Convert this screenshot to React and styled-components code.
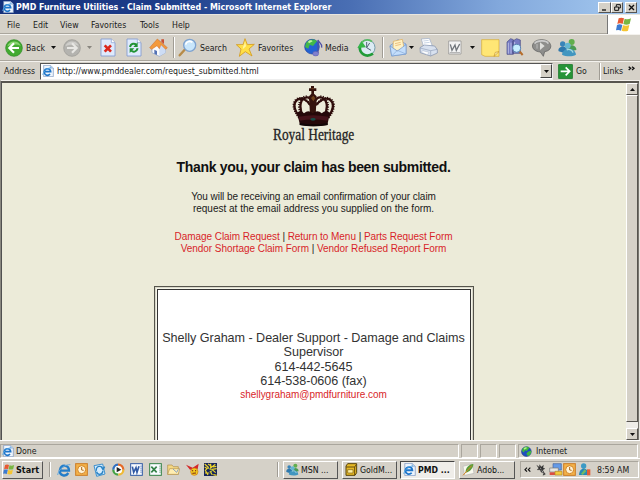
import React from "react";
import styled, { createGlobalStyle, css } from "styled-components";

const Global = createGlobalStyle`
  * { box-sizing: border-box; }
  body { margin: 0; overflow: hidden; }
  svg { display: block; flex: none; }
`;

const face = "#d5d1c8";
const uiFont = css`font-family: "DejaVu Sans Condensed", "DejaVu Sans", sans-serif; font-stretch: condensed;`;

const Desktop = styled.div`
  width: 640px; height: 480px; overflow: hidden;
  display: flex; flex-direction: column;
  background: ${face}; color: #1a1a1a;
  ${uiFont} font-size: 8.7px;
`;
const TitleBar = styled.header`
  height: 14px; flex: none; display: flex; align-items: center;
  padding: 0 3px 0 2px;
  background: linear-gradient(90deg, #15317c 0%, #1d3d8a 25%, #4a6fb4 55%, #82a8dc 78%, #a6caf0 100%);
`;
const Title = styled.h1`
  margin: 0 auto 0 2px; color: #fff; font-size: 8.8px; font-weight: bold; line-height: 13px; white-space: nowrap;
`;
const WinButton = styled.button`
  width: ${p => p.$w}px; height: 11px; padding: 0; margin-left: ${p => p.$gap || 0}px;
  display: grid; place-items: center; background: ${face};
  border: 1px solid; border-color: #fff #555 #555 #fff;
`;
const MenuBar = styled.nav`
  height: 20px; flex: none; display: flex; padding-left: 7px;
  border-top: 1px solid #e9e6df; border-bottom: 1px solid #aaa69d;
`;
const MenuItem = styled.span`
  width: ${p => p.$w}px; line-height: 21px; white-space: nowrap;
`;
const Flag = styled.div`
  width: 33px; height: 19px; margin-left: auto; background: #fff; border-left: 1px solid #777;
  display: grid; place-items: center;
`;
const ToolBar = styled.div`
  height: 27px; flex: none; display: flex; align-items: center; padding-left: 5px;
  border-top: 1px solid #f4f2ee; border-bottom: 1px solid #aaa69d;
`;
const Slot = styled.div`
  width: ${p => p.$w}px; flex: none; display: flex; align-items: center; white-space: nowrap;
`;
const Divider = styled.i`
  width: 2px; height: ${p => p.$h || 21}px; flex: none; margin-right: ${p => p.$gap || 0}px;
  border-left: 1px solid #a09c94; border-right: 1px solid #fff;
`;
const AddressBar = styled.div`
  height: 19px; flex: none; display: flex; align-items: center; padding-left: 4px;
  border-top: 1px solid #f4f2ee;
`;
const AddressField = styled.div`
  width: 513px; height: 17px; display: flex; align-items: center; background: #fff;
  border: 1px solid; border-color: #555 #eee #eee #555; padding-left: 1px;
`;
const Url = styled.span`margin: 0 auto 0 3px; white-space: nowrap;`;
const DropButton = styled.button`
  width: 12px; height: 14px; padding: 0; display: grid; place-items: center; background: ${face};
  border: 1px solid; border-color: #fff #444 #444 #fff;
`;
const Viewport = styled.main`
  height: 360px; flex: none; display: flex; background: #ecebd9; overflow: hidden;
  border-top: 1px solid #f2f0ea; border-left: 1px solid #8a8880; border-right: 1px solid #e5e3dd;
`;
const Frame = styled.div`
  flex: 1; display: flex; border: 1px solid #505050; border-bottom: 0; border-top: 2px solid #58564f; border-right: 0;
`;
const Page = styled.article`
  flex: 1; display: flex; flex-direction: column; align-items: center; overflow: hidden;
  font-family: "Liberation Sans", Arial, sans-serif; padding: 2px 1px 0 0; text-align: center;
`;
const Brand = styled.div`
  height: 17px; font-family: "Liberation Serif", serif; font-size: 16px; line-height: 15px;
  color: #222; white-space: nowrap; transform: scaleX(0.835); -webkit-text-stroke: 0.3px #222;
`;
const Heading = styled.h2`
  margin: 16px 0 0; font-size: 14px; line-height: 18px; font-weight: bold; color: #111; white-space: nowrap;
  letter-spacing: -0.32px;
`;
const Para = styled.div`margin-top: ${p => p.$mt}px;`;
const Line = styled.div`
  font-size: 10px; line-height: 12px; height: 12px; white-space: nowrap; letter-spacing: ${p => p.$ls || 0}px;
  margin-top: ${p => p.$mt || 0}px;
`;
const Link = styled.a`color: #d81f2a; text-decoration: none;`;
const Card = styled.section`
  width: 320px; height: 170px; flex: none; margin-top: 31px; padding-top: 44px; background: #fff;
  border: 1px solid #55544c;
  box-shadow: inset 0 0 0 1px #d9d8c9, inset 0 0 0 2px #f6f5ea, inset 0 0 0 3px #333;
`;
const CardLine = styled.div`
  font-size: 12.6px; line-height: 14.4px; height: 14.3px; color: #333; white-space: nowrap; letter-spacing: -0.04px;
`;
const ScrollBar = styled.div`
  width: 13px; flex: none; display: flex; flex-direction: column; background: #eeece7; border-right: 1px solid #77756f;
`;
const ScrollButton = styled.button`
  height: ${p => p.$h}px; flex: none; padding: 0; display: grid; place-items: center; background: ${face};
  border: 1px solid; border-color: #fff #55534e #55534e #fff;
  margin-top: ${p => p.$mt || 0}px;
`;
const StatusBar = styled.footer`
  height: 18px; flex: none; display: flex; gap: 2px; padding: 3px 2px 1px 0; border-top: 1px solid #fff;
`;
const Pane = styled.div`
  width: ${p => p.$w}px; height: 14px; display: flex; align-items: center; gap: ${p => p.$gap || 2}px; padding-left: ${p => p.$pl || 1}px;
  border: 1px solid; border-color: #aaa69d #fff #fff #aaa69d; white-space: nowrap;
`;
const TaskBar = styled.footer`
  height: 22px; flex: none; display: flex; align-items: center; padding-left: 2px; border-top: 1px solid #fff;
`;
const TaskButton = styled.button`
  ${uiFont} font-size: 8.7px; color: #111; font-weight: ${p => (p.$bold ? "bold" : "normal")};
  width: ${p => p.$w}px; height: 18px; margin: 0 ${p => p.$gap}px 0 0; padding: 0 0 0 2px; flex: none;
  display: flex; align-items: center; gap: 2px; white-space: nowrap;
  background: ${p => (p.$active ? "#efede9" : face)};
  border: 1px solid; border-color: ${p => (p.$active ? "#444 #fff #fff #444" : "#fff #555 #555 #fff")};
`;
const StartButton = styled(TaskButton)`
  font-size: 9px; padding-left: 0; gap: 1px; font-weight: bold;
`;
const Tray = styled.div`
  width: 119px; height: 17px; display: flex; align-items: center; padding-left: 3px;
  border: 1px solid; border-color: #aaa69d #fff #fff #aaa69d;
`;

/* Icons share a 3-units-per-pixel grid. */
const Icon = ({ w = 19, h = 19, vb, children }) => (
  <svg width={w} height={h} viewBox={vb || `0 0 ${w * 3} ${h * 3}`} fill="none">{children}</svg>
);
const Arrow = ({ up, dim }) => (
  <svg width="5" height="3" viewBox="0 0 5 3"><path d={up ? "M0 3L2.5 0L5 3Z" : "M0 0H5L2.5 3Z"} fill={dim ? "#88857e" : "#111"} /></svg>
);
const IePage = ({ s = 12 }) => (
  <Icon w={s} h={s} vb="0 0 36 36">
    <path d="M5 1H25L34 9V35H5Z" fill="#eef5fd" stroke="#7793bd" strokeWidth="2" />
    <path d="M25 1V10H34" fill="#b9d0ec" stroke="#7793bd" />
    <path d="M24 27C17 35 5 29 7 19C9 9 25 8 26 20H9" stroke="#1e75c9" strokeWidth="5" />
    <path d="M2 30C5 17 16 9 28 8" stroke="#52aae9" strokeWidth="2.5" />
  </Icon>
);
const Nav = ({ fwd }) => (
  <Icon w={18} h={18}>
    <circle cx="27" cy="27" r="25" fill={fwd ? "#b4b3af" : "#43aa31"} stroke={fwd ? "#989792" : "#2d8a24"} strokeWidth="2" />
    <path d="M7 22C12 3 41 3 47 21C35 14 20 16 7 22Z" fill={fwd ? "#cfcecb" : "#8ad571"} />
    <path d={fwd ? "M12 27H40M27 13L41 27L27 41" : "M42 27H14M27 13L13 27L27 41"} stroke={fwd ? "#e8e7e4" : "#fff"} strokeWidth="6.5" />
  </Icon>
);
const Sheet = ({ children }) => (
  <Icon w={16} h={19}>
    <path d="M3 3H34L45 14V54H3Z" fill="#dfeafc" stroke="#8098cf" strokeWidth="2.5" />
    <path d="M34 3V14H45" fill="#fff" stroke="#8098cf" strokeWidth="2" />
    {children}
  </Icon>
);
const Home = () => (
  <Icon w={19} h={19}>
    <path d="M9 27V44L31 55L49 44V24L30 8Z" fill="#fbfbfb" stroke="#879fc9" strokeWidth="2" />
    <path d="M31 55V29L42 17L49 27V44Z" fill="#cddcf4" />
    <path d="M37 4H45V18L37 11Z" fill="#c94f33" />
    <path d="M2 29L25 3L55 29L50 34L36 20L31 32L24 23L8 34Z" fill="#f39a3c" stroke="#cd6924" strokeWidth="1.5" />
    <path d="M16 35L24 39V51L16 47Z" fill="#5472b4" />
  </Icon>
);
const SearchIcon = () => (
  <Icon w={19} h={19}>
    <path d="M20 35L5 52" stroke="#b78b48" strokeWidth="7" strokeLinecap="round" />
    <circle cx="35" cy="22" r="18" fill="#c9e6fb" stroke="#7da2cf" strokeWidth="4" />
    <path d="M23 20C25 9 38 8 43 13" stroke="#fff" strokeWidth="5" />
  </Icon>
);
const Star = () => (
  <Icon w={19} h={19}>
    <path d="M27 2L34 20L55 19L39 33L48 54L28 41L10 55L15 33L1 20L21 20Z" fill="#ffdf45" stroke="#d49b21" strokeWidth="2.5" />
    <path d="M27 9L30 25L20 34L22 24L9 22L24 23Z" fill="#fff6a5" />
  </Icon>
);
const Globe = ({ s = 15 }) => (
  <Icon w={s} h={s} vb="0 0 45 45">
    <circle cx="22" cy="23" r="20" fill="#1f4fc0" stroke="#18367f" strokeWidth="2" />
    <path d="M7 10C17 0 31 2 34 8L24 20L16 17L12 27L4 20ZM28 24L42 18C43 31 36 39 28 41L22 32Z" fill="#41b83c" />
    <path d="M11 9C17 4 23 5 25 8L14 15Z" fill="#b8ef8d" />
  </Icon>
);
const Media = () => (
  <Icon w={20} h={19}>
    <circle cx="24" cy="26" r="22" fill="#2462d2" stroke="#1b3e9d" strokeWidth="2" />
    <path d="M6 15C16 1 35 2 39 10L27 24L17 20L13 32L3 27Z" fill="#42b849" />
    <path d="M12 11C17 5 24 6 26 10L15 16Z" fill="#bff5a0" />
    <path d="M42 46V6C45 17 56 15 53 29" stroke="#4d50a7" strokeWidth="4" />
    <ellipse cx="35" cy="47" rx="9" ry="7" fill="#8080cc" stroke="#4547a2" />
  </Icon>
);
const HistoryIcon = () => (
  <Icon w={19} h={19}>
    <circle cx="30" cy="29" r="24" fill="#dcebf4" stroke="#739cab" strokeWidth="3" />
    <path d="M29 12V29L42 37M29 29L38 15" stroke="#526577" strokeWidth="3" />
    <path d="M48 47C27 61 6 46 9 25" stroke="#219b38" strokeWidth="8" />
    <path d="M1 30L14 9L27 28Z" fill="#35b747" />
    <path d="M15 13C24 3 38 4 45 11" stroke="#59bb64" strokeWidth="5" />
  </Icon>
);
const Mail = () => (
  <Icon w={18} h={19}>
    <path d="M3 23L27 5L51 18V48L8 54Z" fill="#a7cbf5" stroke="#6c8fc5" strokeWidth="2" />
    <path d="M13 10L40 4L45 29L25 39L12 31Z" fill="#fff2c5" stroke="#dda852" strokeWidth="2" />
    <path d="M18 17L35 13M19 23L36 19" stroke="#e5a85a" strokeWidth="2" />
    <path d="M3 24L25 39L51 20V48L8 54Z" fill="#c3ddfb" stroke="#7197cb" strokeWidth="2" />
    <path d="M8 54L25 37L51 48" stroke="#86a9d7" strokeWidth="2" />
  </Icon>
);
const Printer = () => (
  <Icon w={19} h={19}>
    <path d="M14 26L7 3L31 1L40 24Z" fill="#fff" stroke="#9aabc5" strokeWidth="2" />
    <path d="M13 9L29 7M15 15L32 13" stroke="#adc0d8" strokeWidth="2" />
    <path d="M3 29L16 21L47 24L55 35V45L35 54L4 44Z" fill="#d8e1ef" stroke="#7c8ba7" strokeWidth="2" />
    <path d="M3 30L35 38L55 34M35 38V54" stroke="#91a0b9" strokeWidth="2" />
    <path d="M11 38L30 43L25 50L7 43Z" fill="#fff" stroke="#8395b2" />
  </Icon>
);
const WordEdit = () => (
  <Icon w={14} h={15}>
    <path d="M2 3H39V42H2Z" fill="#f3f3f3" stroke="#8c8c8c" strokeWidth="2" />
    <path d="M7 13L12 31L21 15L25 31L35 12" stroke="#71767c" strokeWidth="4" />
    <path d="M5 38H36" stroke="#aaa" strokeWidth="3" />
  </Icon>
);
const Note = () => (
  <Icon w={19} h={18}>
    <path d="M2 2H54V52H12L2 47Z" fill="#ffe675" stroke="#d7aa32" strokeWidth="2" />
    <path d="M39 52L43 40L54 38Z" fill="#fff7be" stroke="#c69022" strokeWidth="2" />
  </Icon>
);
const Books = () => (
  <Icon w={18} h={19}>
    <path d="M3 12L14 2L22 5V49H3ZM19 10L32 2L43 6V46H20Z" fill="#777bc3" stroke="#464982" strokeWidth="2" />
    <path d="M7 14V47M15 14V47M26 12V43" stroke="#b9bce4" strokeWidth="3" />
    <path d="M39 38L50 51" stroke="#b66d2b" strokeWidth="6" />
    <circle cx="32" cy="31" r="12" fill="#c6edff" stroke="#5a82b0" strokeWidth="3" />
  </Icon>
);
const Bubble = () => (
  <Icon w={20} h={19}>
    <path d="M29 5C60 5 67 37 38 41L34 55L25 42C-9 39-5 5 29 5Z" fill="#8e8e8c" stroke="#575757" strokeWidth="2" />
    <path d="M8 17C14 7 43 5 49 17" stroke="#ccc" strokeWidth="5" />
    <path d="M24 13L38 24L24 36Z" fill="#dededb" />
    <path d="M15 18V32" stroke="#bbb" strokeWidth="3" />
  </Icon>
);
const People = ({ s = 19 }) => (
  <Icon w={s} h={s} vb="0 0 57 57">
    <circle cx="41" cy="12" r="9" fill="#61ae4d" /><path d="M28 28C32 17 57 20 55 36L36 40Z" fill="#4a9b54" />
    <circle cx="14" cy="18" r="8" fill="#3984b9" /><path d="M1 36C3 23 24 21 28 36L21 46L2 40Z" fill="#2e78ad" />
    <circle cx="29" cy="23" r="9" fill="#65b7d2" /><path d="M12 50C15 26 51 26 54 50C42 57 24 56 12 50Z" fill="#4296c0" />
    <path d="M26 36C34 31 44 37 45 44" stroke="#a6d9de" strokeWidth="4" />
  </Icon>
);
const GoIcon = () => (
  <Icon w={15} h={15}>
    <rect x="1" y="1" width="43" height="43" rx="3" fill="#269336" stroke="#176d25" strokeWidth="2" />
    <path d="M8 22H34M23 10L35 22L23 34" stroke="#fff" strokeWidth="5" />
  </Icon>
);
const WinFlag = ({ w = 16, h = 15 }) => (
  <Icon w={w} h={h} vb="0 0 48 45">
    <path d="M8 4Q16 0 24 4L20 21Q12 17 4 21Z" fill="#e85a33" />
    <path d="M26 5Q35 9 45 4L41 21Q31 25 22 21Z" fill="#79b742" />
    <path d="M3 24Q11 20 19 24L15 41Q8 37 0 40Z" fill="#3d7bd0" />
    <path d="M21 25Q31 28 40 24L36 41Q27 45 17 41Z" fill="#f5c533" />
  </Icon>
);
const Crown = () => (
  <Icon w={43} h={42} vb="98 14 129 126">
    <path d="M122 112C100 84 103 67 114 58C129 50 144 61 153 74M131 109C116 76 124 50 146 51C155 53 159 69 160 107M205 112C226 84 223 67 212 58C199 50 184 59 170 74M194 109C210 78 202 50 180 51C168 53 161 69 161 107" stroke="#35100e" strokeWidth="7" />
    <path d="M120 112C98 84 101 66 112 57C129 48 144 60 153 74M128 109C112 75 121 47 146 49M207 112C228 84 226 66 214 57C199 48 184 58 170 74M197 109C213 78 205 47 180 49" stroke="#280b0a" strokeWidth="8" strokeDasharray="3 4" />
    <path d="M155 17H164V24H171V32H164V40L172 48L169 104H152L149 48L156 40V32H149V24H155Z" fill="#35130d" />
    <path d="M155 53L162 46L168 54L162 63Z" fill="#70441c" />
    <path d="M156 25H164" stroke="#6a3b1e" strokeWidth="3" />
    <path d="M113 97Q124 87 134 99Q147 86 160 99Q175 86 187 99Q199 87 212 97L204 134Q162 142 122 134Z" fill="#250809" />
    <path d="M118 109Q161 100 207 109L204 121Q162 114 121 121Z" fill="#45131a" />
    <path d="M121 131Q162 139 205 131" stroke="#120606" strokeWidth="6" />
    <ellipse cx="161" cy="117" rx="8" ry="4" fill="#174d48" />
  </Icon>
);
const IeMark = () => (
  <Icon w={14} h={14}>
    <path d="M34 30C25 44 5 36 9 20C13 3 36 5 36 23H11" stroke="#247dc9" strokeWidth="7" />
    <path d="M2 36C4 19 24 4 40 5" stroke="#66a9dc" strokeWidth="3" />
  </Icon>
);
const ClockTile = ({ s = 13 }) => (
  <Icon w={s} h={s} vb="0 0 39 39">
    <rect x="2" y="2" width="35" height="35" fill="#f4b349" stroke="#cc7c25" strokeWidth="3" />
    <circle cx="20" cy="20" r="12" fill="#fff3d5" stroke="#d38324" strokeWidth="3" /><path d="M20 12V21L26 22" stroke="#ad671d" strokeWidth="3" />
  </Icon>
);
const Express = () => (
  <Icon w={13} h={14}>
    <path d="M3 8L29 3L36 33L11 40Z" fill="#d4ebfc" stroke="#3e91ce" strokeWidth="3" />
    <path d="M10 23C9 7 27 7 29 18M25 12L30 20L35 11M30 24C27 38 12 36 11 26" stroke="#2a83c5" strokeWidth="4" />
  </Icon>
);
const Player = () => (
  <Icon w={13} h={13}>
    <circle cx="19" cy="20" r="15" fill="#fff" />
    <path d="M18 5A15 15 0 0 0 4 20" stroke="#3170c2" strokeWidth="7" /><path d="M4 20A15 15 0 0 0 19 35" stroke="#45a246" strokeWidth="7" />
    <path d="M18 5A15 15 0 0 1 34 20" stroke="#e56b29" strokeWidth="7" /><path d="M34 20A15 15 0 0 1 19 35" stroke="#efba36" strokeWidth="7" />
    <path d="M14 12L28 20L14 28Z" fill="#222" />
  </Icon>
);
const OfficeTile = ({ color, d }) => (
  <Icon w={13} h={13}>
    <rect x="2" y="2" width="35" height="35" fill="#f8fbff" stroke={color} strokeWidth="3" /><path d={d} stroke={color} strokeWidth="5" /><path d="M33 8V32" stroke={color} strokeDasharray="3 3" strokeWidth="3" />
  </Icon>
);
const Folder = () => (
  <Icon w={13} h={13}>
    <path d="M2 6H15L19 11H34V34H2Z" fill="#f4d883" stroke="#af8d48" strokeWidth="2" /><path d="M8 17H38L34 34H2Z" fill="#ffedb0" stroke="#b49350" strokeWidth="2" /><path d="M18 18L29 28L34 19" stroke="#87a0bf" strokeWidth="3" />
  </Icon>
);
const Creature = () => (
  <Icon w={14} h={13}>
    <path d="M0 5L20 14L38 2L35 18L12 20Z" fill="#d42929" /><circle cx="25" cy="26" r="11" fill="#f2cd1c" stroke="#c7701b" strokeWidth="2" /><path d="M20 21V25M29 21V25M19 31L30 30" stroke="#812615" strokeWidth="3" />
  </Icon>
);
const Maze = () => (
  <Icon w={13} h={13}>
    <rect width="39" height="39" fill="#17255d" /><path d="M2 3L13 13L4 22L12 36M20 2V15L34 4M38 17L24 19L35 29M18 24L25 36M3 30H16M12 3L23 10M28 35L38 37M2 12L8 16M27 12L37 10" stroke="#efd62a" strokeWidth="3.5" /><path d="M11 15L25 22L19 31" stroke="#a3b14d" strokeWidth="3" />
  </Icon>
);
const Gold = () => (
  <Icon w={13} h={13}>
    <path d="M3 9L8 2H35V29L30 37H3Z" fill="#e6b927" stroke="#59450a" strokeWidth="3" /><path d="M3 12H29V36M29 12L35 3" stroke="#654c0c" strokeWidth="3" /><path d="M8 20H24V30H8Z" fill="#fff0a1" stroke="#7b5c0d" strokeWidth="2" />
  </Icon>
);
const Feather = () => (
  <Icon w={13} h={13}>
    <path d="M3 10L31 3L36 31L8 37Z" fill="#f9f9ef" stroke="#aaa" strokeWidth="1.5" /><path d="M11 29C9 16 22 2 34 3C34 15 24 27 11 29Z" fill="#5a9e3a" /><path d="M3 37L29 8" stroke="#d68424" strokeWidth="3" />
  </Icon>
);
const Imp = () => (
  <Icon w={10} h={14} vb="0 0 36 42">
    <path d="M3 4L12 11L13 2L19 10L27 4L25 14L32 16L24 21L29 30L34 36L25 40L28 33L18 28L15 20L4 20L10 15Z" fill="#333" stroke="#222" strokeWidth="1" /><path d="M15 14L19 17M21 23L25 30" stroke="#eee" strokeWidth="2.5" />
  </Icon>
);
const Network = () => (
  <Icon w={14} h={13}>
    <path d="M12 2H37V21H12Z" fill="#659be7" stroke="#45659c" strokeWidth="2" /><path d="M2 15H28V27H2Z" fill="#e6e6e2" stroke="#777" strokeWidth="2" /><path d="M2 28H25V36H2Z" fill="#dc4d42" /><path d="M18 25H39V36H18Z" fill="#f2cb3e" stroke="#b88925" strokeWidth="2" />
  </Icon>
);
const Buddy = () => (
  <Icon w={13} h={14}>
    <circle cx="17" cy="9" r="8" fill="#3c9ac5" /><path d="M3 36C4 10 31 10 31 36Z" fill="#2788b8" /><path d="M9 32L20 19L25 25L14 36Z" fill="#72bb63" /><path d="M27 19H37V37H27Z" fill="#e45e35" />
  </Icon>
);

const menus = [["File", 26], ["Edit", 27], ["View", 31], ["Favorites", 49], ["Tools", 32], ["Help", 30]];

export default function App() {
  return (
    <Desktop>
      <Global />
      <TitleBar>
        <IePage s={12} />
        <Title>PMD Furniture Utilities - Claim Submitted - Microsoft Internet Explorer</Title>
        <WinButton $w={13}><Icon w={7} h={7}><path d="M3 18H15" stroke="#111" strokeWidth="4" /></Icon></WinButton>
        <WinButton $w={12}><Icon w={7} h={7}><path d="M7 8V2H19V12H14M2 9H14V19H2Z" stroke="#111" strokeWidth="3" /></Icon></WinButton>
        <WinButton $w={12} $gap={2}><Icon w={7} h={7}><path d="M3 3L18 18M18 3L3 18" stroke="#111" strokeWidth="4" /></Icon></WinButton>
      </TitleBar>
      <MenuBar>
        {menus.map(([name, w]) => <MenuItem key={name} $w={w}>{name}</MenuItem>)}
        <Flag><WinFlag /></Flag>
      </MenuBar>
      <ToolBar>
        <Slot $w={21}><Nav /></Slot>
        <Slot $w={25}>Back</Slot>
        <Slot $w={12}><Arrow /></Slot>
        <Slot $w={24}><Nav fwd /></Slot>
        <Slot $w={13}><Arrow dim /></Slot>
        <Slot $w={26}><Sheet><path d="M14 22L33 41M33 22L14 41" stroke="#dc281d" strokeWidth="8" /></Sheet></Slot>
        <Slot $w={23}><Sheet><path d="M12 27C15 15 26 16 31 20M35 31C32 43 21 43 16 38" stroke="#219334" strokeWidth="6" /><path d="M35 13V27H22ZM11 45V31H25Z" fill="#219334" /></Sheet></Slot>
        <Slot $w={24}><Home /></Slot>
        <Divider $gap={3} />
        <Slot $w={22}><SearchIcon /></Slot>
        <Slot $w={36}>Search</Slot>
        <Slot $w={22}><Star /></Slot>
        <Slot $w={46}>Favorites</Slot>
        <Slot $w={21}><Media /></Slot>
        <Slot $w={32}>Media</Slot>
        <Slot $w={25}><HistoryIcon /></Slot>
        <Divider $gap={5} />
        <Slot $w={20}><Mail /></Slot>
        <Slot $w={10}><Arrow /></Slot>
        <Slot $w={29}><Printer /></Slot>
        <Slot $w={22}><WordEdit /></Slot>
        <Slot $w={11}><Arrow /></Slot>
        <Slot $w={25}><Note /></Slot>
        <Slot $w={26}><Books /></Slot>
        <Slot $w={26}><Bubble /></Slot>
        <Slot $w={20}><People /></Slot>
      </ToolBar>
      <AddressBar>
        <Slot $w={36}>Address</Slot>
        <AddressField>
          <IePage s={12} />
          <Url>http://www.pmddealer.com/request_submitted.html</Url>
          <DropButton><Arrow /></DropButton>
        </AddressField>
        <Slot $w={5} />
        <Slot $w={18}><GoIcon /></Slot>
        <Slot $w={23}>Go</Slot>
        <Divider $h={17} $gap={2} />
        <Slot $w={25}>Links</Slot>
        <Icon w={8} h={12}><path d="M2 5L8 10L2 15M12 5L18 10L12 15" stroke="#111" strokeWidth="4" /></Icon>
      </AddressBar>
      <Viewport>
        <Frame>
          <Page>
            <Crown />
            <Brand>Royal Heritage</Brand>
            <Heading>Thank you, your claim has been submitted.</Heading>
            <Para $mt={15}>
              <Line $ls={-0.05}>You will be receiving an email confirmation of your claim</Line>
              <Line>request at the email address you supplied on the form.</Line>
            </Para>
            <Para $mt={16}>
              <Line $ls={-0.05}><Link>Damage Claim Request</Link> | <Link>Return to Menu</Link> | <Link>Parts Request Form</Link></Line>
              <Line $ls={-0.05}><Link>Vendor Shortage Claim Form</Link> | <Link>Vendor Refused Report Form</Link></Line>
            </Para>
            <Card>
              <CardLine>Shelly Graham - Dealer Support - Damage and Claims</CardLine>
              <CardLine>Supervisor</CardLine>
              <CardLine>614-442-5645</CardLine>
              <CardLine>614-538-0606 (fax)</CardLine>
              <Line $mt={1} $ls={-0.03}><Link>shellygraham@pmdfurniture.com</Link></Line>
            </Card>
          </Page>
          <ScrollBar>
            <ScrollButton $h={12}><Arrow up /></ScrollButton>
            <ScrollButton $h={327} />
            <ScrollButton $h={12} $mt={6}><Arrow /></ScrollButton>
          </ScrollBar>
        </Frame>
      </Viewport>
      <StatusBar>
        <Pane $w={459}><IePage s={12} />Done</Pane>
        <Pane $w={17} /><Pane $w={17} /><Pane $w={17} />
        <Pane $w={120} $gap={4} $pl={2}><Globe s={11} />Internet</Pane>
      </StatusBar>
      <TaskBar>
        <StartButton $w={41} $gap={6}><WinFlag w={12} h={11} />Start</StartButton>
        <Divider $h={15} $gap={6} />
        <Slot $w={18}><IeMark /></Slot>
        <Slot $w={18}><ClockTile /></Slot>
        <Slot $w={19}><Express /></Slot>
        <Slot $w={18}><Player /></Slot>
        <Slot $w={19}><OfficeTile color="#315aa5" d="M7 11L11 28L18 14L21 28L27 10" /></Slot>
        <Slot $w={18}><OfficeTile color="#348247" d="M7 11L23 28M23 11L7 28" /></Slot>
        <Slot $w={19}><Folder /></Slot>
        <Slot $w={18}><Creature /></Slot>
        <Slot $w={73}><Maze /></Slot>
        <Divider $h={15} $gap={4} />
        <TaskButton $w={55} $gap={4}><People s={13} />MSN ...</TaskButton>
        <TaskButton $w={55} $gap={3}><Gold />GoldM...</TaskButton>
        <TaskButton $w={55} $gap={4} $bold $active><IePage s={13} />PMD ...</TaskButton>
        <TaskButton $w={56} $gap={5}><Feather />Adob...</TaskButton>
        <Tray>
          <Slot $w={12}><Icon w={8} h={6}><path d="M9 2L3 8L9 14M19 2L13 8L19 14" stroke="#111" strokeWidth="3.5" /></Icon></Slot>
          <Slot $w={13}><Imp /></Slot>
          <Slot $w={14}><Network /></Slot>
          <Slot $w={15}><ClockTile s={13} /></Slot>
          <Slot $w={19}><Buddy /></Slot>
          <Slot $w={34}>8:59 AM</Slot>
        </Tray>
      </TaskBar>
    </Desktop>
  );
}
